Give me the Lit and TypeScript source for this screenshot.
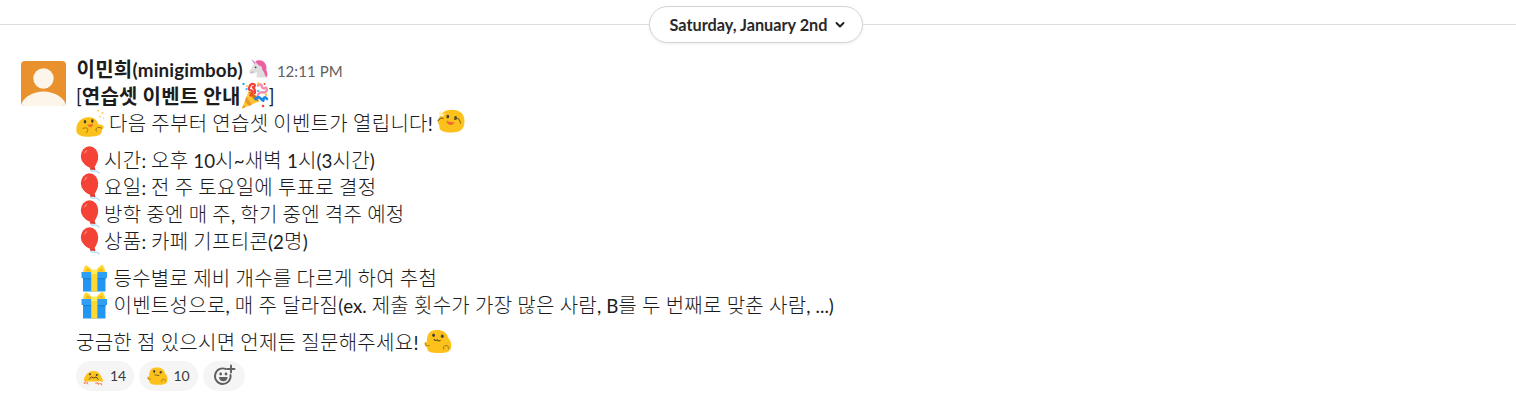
import { LitElement, html, css, svg } from "lit";
import { customElement } from "lit/decorators.js";

const runs = (text: string) =>
  text
    .split(/([가-힣]+)/)
    .filter((s) => s !== "")
    .map((s) => (/[가-힣]/.test(s) ? html`<span class="ko">${s}</span>` : html`<span>${s}</span>`));

const blobCheer = html`<svg class="emoji" viewBox="0 0 28 28">
  <path d="M.3 20.500C.5 13.500 5 8.300 12.500 8.300C18.500 8.300 21 11 22.500 15.500C24.500 15.500 27.500 16 27.700 18C27.800 19.500 26.500 20 26 20.500C26.500 25.500 22 27.700 13.500 27.700C5 27.700 .3 26.500 .3 20.500Z" fill="#fcc21b"/>
  <ellipse cx="9" cy="12.800" rx="1.300" ry="1.700" fill="#44403a"/><ellipse cx="16.300" cy="12" rx="1.300" ry="1.700" fill="#44403a"/>
  <path d="M11 15.300Q14 16.300 17 14.500Q16.700 18.300 14.300 18.200Q11.700 18 11 15.300Z" fill="#ef6a35"/>
  <path d="M6.500 19.500Q11.500 17.800 11.800 20.500Q11.800 22.500 10.300 24M20.500 22.500Q18.500 19.500 21.500 18.500Q24 18 26 19.300" fill="none" stroke="#9c7b1c" stroke-width="1"/>
  <g fill="#fbcf5f"><circle cx="22.200" cy="1.800" r="1"/><circle cx="26.500" cy="4" r="1.100"/><circle cx="24" cy="7.500" r=".9"/><circle cx="27.400" cy="9" r=".7"/></g>
</svg>`;

const blobDance = html`<svg class="emoji dance" viewBox="0 0 28 28">
  <path d="M1 14C2 5 7 .8 15 .8C23 .8 27.500 5 27.500 12C27.500 20 23.500 23.500 15 23.500C7 23.500 1.500 22 2.500 17Z" fill="#fcc21b"/>
  <path d="M1.500 4L4 2L5.500 5L8 4L6 7.500L3 7Z" fill="#fff1bc"/>
  <ellipse cx="10.800" cy="7.600" rx="1.400" ry="1.900" fill="#44403a"/><ellipse cx="18.600" cy="9" rx="1.400" ry="1.900" fill="#44403a"/>
  <path d="M9.300 11.500Q13 13.700 17.500 13Q16.500 16.500 13.200 16Q10 15.500 9.300 11.500Z" fill="#ef6a35"/>
  <path d="M.7 12.300Q3.500 7.500 6.500 9.800M17 10.500Q20 8 22 10.500Q23.500 12.500 23.500 14.500" fill="none" stroke="#79601a" stroke-width="1.100"/>
</svg>`;

const blobShape = svg`
  <path d="M2.800 13C2.800 6 5 1.200 12 1C19 .8 22.700 3.500 24 8.500C26.500 11 27.500 14 27.300 17.500C27 22.500 23 24 15 24C7 24 2.800 23 3.200 18.500C.8 18 .2 15.500 .8 13.800Z" fill="#fcc21b"/>
  <ellipse cx="9.600" cy="6.200" rx="1.400" ry="1.800" fill="#44403a"/><ellipse cx="18.300" cy="7.300" rx="1.400" ry="1.800" fill="#44403a"/>
  <path d="M10 10Q11 12.500 13.200 10.800Q14.500 13 16.500 11.200" fill="none" stroke="#5b4c22" stroke-width="1.100"/>
  <path d="M1.300 13.500Q.8 17.500 5.500 16.500M19.500 20.500Q19 16.500 22 16.300Q25 16.500 24.500 20" fill="none" stroke="#9c7b1c" stroke-width="1"/>`;

const blobSmile = html`<svg class="emoji smile" viewBox="0 0 28 28">${blobShape}</svg>`;

const party = html`<svg class="emoji" viewBox="0 0 28 28">
  <path d="M1 26.500L7.500 9.500Q16 13 18 19.500Z" fill="#ffc52f"/>
  <path d="M5.500 14.500L11 22.700L8 24L3.800 19.200ZM1 26.500L2.200 23L4.500 25.300Z" fill="#ed9b26"/>
  <path d="M7.500 9.500Q16 11.500 18 19.500Q11.500 18 7.500 9.500Z" fill="#c97518"/>
  <g fill="none" stroke-linecap="round" stroke-linejoin="round">
    <path d="M9.500 13.500Q13 10 10.500 8.500Q6.500 8.500 8.500 4.500Q10 .8 13.500 2.500Q14.500 5 11.800 5.200Q14.500 7 13.800 11" stroke="#f44336" stroke-width="2.300"/>
    <path d="M17 3.500Q20.500 .8 21 5Q22 7.500 25 5.500Q27.500 9 23 10.500Q18 9 16.500 14" stroke="#f48fb1" stroke-width="2.500"/>
    <path d="M14.500 17Q18 13.500 20.500 17.500Q23 20.500 22.500 16.500Q24 14 26 17" stroke="#1e88e5" stroke-width="2.600"/>
  </g>
  <g fill="#29a9f3"><circle cx="2.500" cy="2" r="1.200"/><circle cx="5.500" cy="7" r="1"/><circle cx="17" cy="9" r="1"/></g>
  <g fill="#fbc02d"><circle cx="17.500" cy="1.500" r="1.200"/><circle cx="25" cy="12.500" r="1.200"/><circle cx="6" cy="4" r="1"/></g>
  <g fill="#f44336"><circle cx="23.500" cy="2" r="1"/><circle cx="22" cy="24" r="1.300"/></g>
</svg>`;

const balloon = html`<svg class="emoji" viewBox="0 0 28 28">
  <path d="M15.500 22Q13.500 26 18.500 25Q21 24.500 23.500 27.500" fill="none" stroke="#a9dcf7" stroke-width="1.300"/>
  <path d="M14.500 20.500L18.500 20.500L19.500 24L14 23.500Z" fill="#d8332b"/>
  <ellipse cx="13.500" cy="10" rx="8.700" ry="9.700" fill="#f44336"/>
  <path d="M6 14Q9.500 22 17.500 22.500Q22.500 16 22.100 10Z" fill="#f44336"/>
  <path d="M8 8Q8.500 4.500 11.500 3.500Q10.500 7 8 8Z" fill="#fb8c82"/>
</svg>`;

const gift = html`<svg class="emoji" viewBox="0 0 28 28">
  <path d="M3 11H25.500V27.500H3Z" fill="#2196f3"/><path d="M1.500 8H27V14H1.500Z" fill="#2f9ff5"/>
  <path d="M3 14H25.500V15.300H3Z" fill="#1783db"/>
  <path d="M11.200 8H17.400V27.500H11.200Z" fill="#fdd835"/>
  <path d="M3 8Q3.500 3 6 1.300Q9 2.500 12 6H16.500Q20 1 22.800 1Q25 4 25.500 8Z" fill="#fdd835"/>
  <path d="M5.500 7.500Q6 4.500 7.500 4Q10 5.500 11 7.500ZM23.500 7.500Q23 4.500 21.500 4Q19 5.500 17.500 7.500Z" fill="#f9b71b"/>
  <path d="M11.500 5.500H17V10H11.500Z" fill="#ffeb5b"/>
</svg>`;

const unicorn = html`<svg class="unicorn" viewBox="0 0 19 19">
  <path d="M2 0L8 4.500L6 6Z" fill="#c78bc8"/>
  <path d="M7.500 3.500Q14.500 2.500 16 10L17.500 18.500H7.500L8 13Q4 15.500 1 14Q-.5 12.500 2.500 9.500Q4 5 7.500 3.500Z" fill="#dedede"/>
  <path d="M6.500 3Q7 1 9.500 1.200Q14.500 .8 16.500 5Q18 8 17.200 11Q19.500 15 17.500 18.500Q15.500 16 15 13Q12.500 11 13 8Q9.500 7 6.500 3Z" fill="#ec5fa1"/>
  <path d="M1 14Q3 11 5 13Q3 15 1 14Z" fill="#c6b8be"/><circle cx="6.600" cy="8.300" r=".9" fill="#444"/>
</svg>`;

@customElement("app-root")
export class AppRoot extends LitElement {
  static styles = css`
    :host { display: block; width: 100%; height: 400px; overflow: hidden; background: #fff; color: #1d1c1d;
      font-family: Lato, "Noto Sans CJK KR", sans-serif; font-size: 18.75px; line-height: 27px; }
    .divider { display: flex; align-items: center; padding-top: 6px; height: 37px; box-sizing: content-box; }
    .rule { height: 1px; background: #ddd; }
    .left { width: 649px; }
    .right { flex: 1; }
    .date { box-sizing: border-box; width: 214px; height: 37px; border: 1px solid #d2d2d2; border-radius: 19px;
      display: flex; align-items: center; gap: 4px; padding-left: 19.500px; font-size: 16.25px; font-weight: 700;
      box-shadow: 0 1px 3px rgba(0,0,0,.08); white-space: nowrap; }
    .date-text { width: 160px; color: #2a292a; }
    .chevron { width: 12px; height: 12px; }
    .message { display: flex; padding: 12px 0 0 21px; }
    .avatar { width: 45px; height: 45px; margin: 6px 10px 0 0; flex: none; }
    .row { display: flex; align-items: center; height: 27px; white-space: pre; word-spacing: .15px; }
    .group { margin-bottom: 10px; }
    .last { margin-bottom: 6px; }
    .name { font-weight: 700; letter-spacing: .15px; padding-left: .5px; }
    .ko { font-family: "Noto Sans CJK KR", sans-serif; font-size: 20px; font-weight: 300; letter-spacing: .28px; }
    .bold, .name .ko, .bold .ko { font-weight: 700; }
    .time { font-size: 15px; color: #616061; margin-left: 9px; padding-top: 6px; letter-spacing: .05px; }
    .emoji { width: 28px; height: 28px; flex: none; overflow: visible; }
    .dance { margin-left: -.5px; }
    .smile { margin: 3px 0 0 .5px; }
    .unicorn { width: 19px; height: 19px; margin: 0 0 1px 6px; }
    .after { padding-left: 5px; }
    .gift-text { padding-left: 5.500px; }
    .before { padding-right: 5px; }
    .indent { padding-left: 4px; }
    .reactions { display: flex; gap: 5px; }
    .pill { height: 30px; border-radius: 15px; background: #f5f5f5; display: flex; align-items: center; box-sizing: border-box;
      padding-left: 7px; gap: 5px; font-size: 14px; width: 58px; color: #3c3b3c; }
    .wide { width: 59px; padding-left: 7.500px; }
    .add { width: 42px; padding-left: 10px; }
    .mini { width: 21px; height: 21px; flex: none; }
    .count { padding: 0 0 2px 1px; }
    .add-icon { width: 23px; height: 23px; margin-bottom: 2px; }
  `;

  render() {
    return html`
      <div class="divider">
        <div class="rule left"></div>
        <div class="date"><span class="date-text">Saturday, January 2nd</span>
          <svg class="chevron" viewBox="0 0 12 12"><path d="M2.500 4L6 7.500L9.500 4" fill="none" stroke="#1d1c1d" stroke-width="1.900" stroke-linecap="round" stroke-linejoin="round"/></svg>
        </div>
        <div class="rule right"></div>
      </div>
      <div class="message">
        <svg class="avatar" viewBox="0 0 45 45">
          <defs><clipPath id="tile"><rect width="45" height="45" rx="4"/></clipPath></defs>
          <g clip-path="url(#tile)"><rect width="45" height="45" fill="#e8912d"/><circle cx="22.500" cy="17.500" r="10.200" fill="#fdf4ea"/>
          <path d="M0 45Q1 39 7 35Q14 30.500 22.500 30.500Q31 30.500 38 35Q44 39 45 45Z" fill="#fdf4ea"/></g>
        </svg>
        <div>
          <div class="row"><span class="name">${runs("이민희(minigimbob)")}</span>${unicorn}<span class="time">12:11 PM</span></div>
          <div class="row"><span>[</span><span class="bold">${runs("연습셋 이벤트 안내")}</span>${party}<span>]</span></div>
          <div class="row group">${blobCheer}<span class="after">${runs("다음 주부터 연습셋 이벤트가 열립니다!")}</span><span class="before"></span>${blobDance}</div>
          ${["시간: 오후 10시~새벽 1시(3시간)", "요일: 전 주 토요일에 투표로 결정", "방학 중엔 매 주, 학기 중엔 격주 예정"].map(
            (t) => html`<div class="row">${balloon}<span>${runs(t)}</span></div>`
          )}
          <div class="row group">${balloon}<span>${runs("상품: 카페 기프티콘(2명)")}</span></div>
          <div class="row indent">${gift}<span class="gift-text">${runs("등수별로 제비 개수를 다르게 하여 추첨")}</span></div>
          <div class="row indent group">${gift}<span class="gift-text">${runs("이벤트성으로, 매 주 달라짐(ex. 제출 횟수가 가장 많은 사람, B를 두 번째로 맞춘 사람, ...)")}</span></div>
          <div class="row last"><span class="before">${runs("궁금한 점 있으시면 언제든 질문해주세요!")}</span>${blobSmile}</div>
          <div class="reactions">
            <div class="pill"><svg class="mini" viewBox="0 0 21 21">
              <path d="M.8 13.500Q3.500 5 10.500 5Q16.500 5 18 10.500Q20.500 13 20 16Q17 15 13.500 15.500H4.500Q1 15.500 .8 13.500Z" fill="#fcc21b"/>
              <circle cx="7" cy="8.300" r="1" fill="#44403a"/><circle cx="13.800" cy="9" r="1" fill="#44403a"/>
              <path d="M6 13.500L8.500 10.800L10.500 12L13 11L15.500 13.700" fill="none" stroke="#594a20" stroke-width="1"/>
              <path d="M2.500 15L1 18M4 16L5 18.500M1 17H4.500M12 17L18.500 18M14 16L15.500 19M18 17L19 19.500" fill="none" stroke="#f58a67" stroke-width="1"/>
            </svg><span class="count">14</span></div>
            <div class="pill wide"><svg class="mini" viewBox="0 -1 28 28">${blobShape}</svg><span class="count">10</span></div>
            <div class="pill add"><svg class="add-icon" viewBox="0 0 23 23">
              <path d="M13 5.100A7.800 7.800 0 1 0 17.500 11" fill="none" stroke="#616061" stroke-width="1.900" stroke-linecap="round"/>
              <path d="M18 1.500V8.500M14.500 5H21.500" stroke="#616061" stroke-width="1.900" stroke-linecap="round"/>
              <circle cx="7.700" cy="10" r="1.400" fill="#616061"/><circle cx="13" cy="10" r="1.400" fill="#616061"/>
              <path d="M6 13H14.600Q14.200 17.300 10.300 17.300Q6.400 17.300 6 13Z" fill="#616061"/>
            </svg></div>
          </div>
        </div>
      </div>`;
  }
}
